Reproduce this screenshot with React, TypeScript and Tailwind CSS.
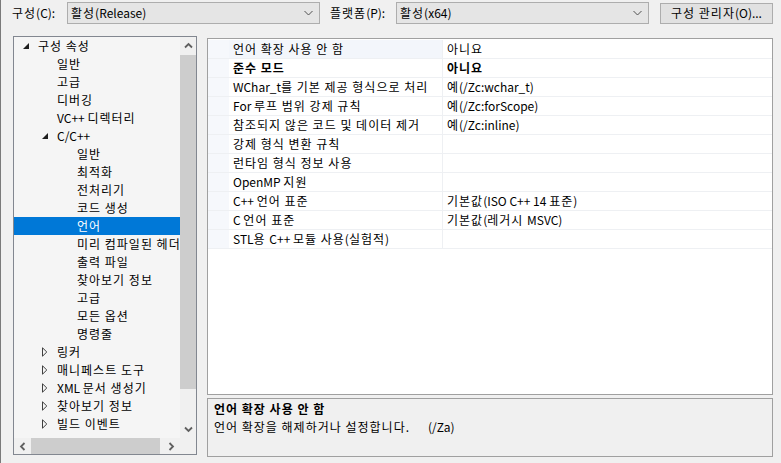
import React from 'react';

type TreeItem = { l: number; t: string; tri?: 'open' | 'closed'; sel?: boolean };

const tree: TreeItem[] = [
  { l: 0, t: '구성 속성', tri: 'open' },
  { l: 1, t: '일반' },
  { l: 1, t: '고급' },
  { l: 1, t: '디버깅' },
  { l: 1, t: 'VC++ 디렉터리' },
  { l: 1, t: 'C/C++', tri: 'open' },
  { l: 2, t: '일반' },
  { l: 2, t: '최적화' },
  { l: 2, t: '전처리기' },
  { l: 2, t: '코드 생성' },
  { l: 2, t: '언어', sel: true },
  { l: 2, t: '미리 컴파일된 헤더' },
  { l: 2, t: '출력 파일' },
  { l: 2, t: '찾아보기 정보' },
  { l: 2, t: '고급' },
  { l: 2, t: '모든 옵션' },
  { l: 2, t: '명령줄' },
  { l: 1, t: '링커', tri: 'closed' },
  { l: 1, t: '매니페스트 도구', tri: 'closed' },
  { l: 1, t: 'XML 문서 생성기', tri: 'closed' },
  { l: 1, t: '찾아보기 정보', tri: 'closed' },
  { l: 1, t: '빌드 이벤트', tri: 'closed' },
];

const props: { n: string; v: string; b?: boolean }[] = [
  { n: '언어 확장 사용 안 함', v: '아니요' },
  { n: '준수 모드', v: '아니요', b: true },
  { n: 'WChar_t를 기본 제공 형식으로 처리', v: '예(/Zc:wchar_t)' },
  { n: 'For 루프 범위 강제 규칙', v: '예(/Zc:forScope)' },
  { n: '참조되지 않은 코드 및 데이터 제거', v: '예(/Zc:inline)' },
  { n: '강제 형식 변환 규칙', v: '' },
  { n: '런타임 형식 정보 사용', v: '' },
  { n: 'OpenMP 지원', v: '' },
  { n: 'C++ 언어 표준', v: '기본값(ISO C++ 14 표준)' },
  { n: 'C 언어 표준', v: '기본값(레거시 MSVC)' },
  { n: 'STL용 C++ 모듈 사용(실험적)', v: '' },
];

const indents = ['w-[0px]', 'w-[19px]', 'w-[39px]'];

// Widen Hangul runs slightly so they match the reference font's metrics.
function K({ s }: { s: string }) {
  const parts = s.split(/([\uAC00-\uD7A3][\uAC00-\uD7A3 ]*)/);
  return (
    <>
      {parts.map((p, i) =>
        /[\uAC00-\uD7A3]/.test(p) ? (
          <span key={i} className="tracking-[1px]">
            {p}
          </span>
        ) : (
          <React.Fragment key={i}>{p}</React.Fragment>
        )
      )}
    </>
  );
}

function Chevron({ dir }: { dir: 'up' | 'down' | 'left' | 'right' }) {
  const d =
    dir === 'up'
      ? 'M1 5.5 L4.5 2 L8 5.5'
      : dir === 'down'
      ? 'M1 1.5 L4.5 5 L8 1.5'
      : dir === 'left'
      ? 'M5.5 1 L2 4.5 L5.5 8'
      : 'M1.5 1 L5 4.5 L1.5 8';
  const w = dir === 'up' || dir === 'down' ? 9 : 7;
  const h = dir === 'up' || dir === 'down' ? 7 : 9;
  return (
    <svg width={w} height={h} viewBox={`0 0 ${w} ${h}`}>
      <path d={d} fill="none" stroke="#606060" strokeWidth="1.8" />
    </svg>
  );
}

function Combo({ text }: { text: string }) {
  return (
    <div className="flex h-[22px] w-[253px] items-center justify-between border border-[#adadad] bg-[#e5e5e5] pl-[3px] pr-[6px]">
      <span>
        <K s={text} />
      </span>
      <svg width="9" height="6" viewBox="0 0 9 6">
        <path d="M0.5 1 L4.5 5 L8.5 1" fill="none" stroke="#505050" strokeWidth="1" />
      </svg>
    </div>
  );
}

export default function App() {
  return (
    <div
      className="relative h-[463px] w-[781px] overflow-hidden bg-[#f0f0f0] text-[12px] text-black shadow-[inset_1px_0_0_#7a7a7a]"
      style={{ fontFamily: '"Noto Sans CJK KR", "Noto Sans", sans-serif' }}
    >
      {/* top bar */}
      <div className="flex h-[26px] items-center pl-[12px]">
        <span className="w-[55px]">
          <K s="구성(C):" />
        </span>
        <Combo text="활성(Release)" />
        <span className="ml-[10px] w-[66px]">
          <K s="플랫폼(P):" />
        </span>
        <Combo text="활성(x64)" />
        <div className="ml-[11px] flex h-[21px] w-[113px] items-center justify-center border border-[#adadad] bg-[#e1e1e1]">
          <K s="구성 관리자(O)..." />
        </div>
      </div>

      <div className="flex items-start">
        {/* tree */}
        <div className="ml-[13px] mt-[10px] flex h-[419px] w-[184px] flex-col border border-[#828790] bg-[#f5f5f5]">
          <div className="flex h-[401px]">
            <div className="w-[166px] overflow-hidden whitespace-nowrap">
              {tree.map((it, i) => (
                <div
                  key={i}
                  className={`flex h-[18px] items-center leading-[18px] ${it.sel ? 'bg-[#0078d7] text-white' : ''}`}
                >
                  <div className={`${indents[it.l]} shrink-0`} />
                  <div className="flex w-[24px] shrink-0 items-center pl-[9px]">
                    {it.tri === 'open' && (
                      <svg width="6" height="6" viewBox="0 0 6 6">
                        <polygon points="6,0 6,6 0,6" fill="#1e1e1e" />
                      </svg>
                    )}
                    {it.tri === 'closed' && (
                      <svg width="6" height="10" viewBox="0 0 6 10">
                        <polygon points="0.5,0.8 4.8,5 0.5,9.2" fill="none" stroke="#404040" strokeWidth="1" />
                      </svg>
                    )}
                  </div>
                  <span>
                    <K s={it.t} />
                  </span>
                </div>
              ))}
            </div>
            {/* vertical scrollbar */}
            <div className="flex w-[16px] flex-col bg-[#f0f0f0]">
              <div className="flex h-[17px] items-center justify-center">
                <Chevron dir="up" />
              </div>
              <div className="mt-[1px] h-[334px] bg-[#cdcdcd]" />
              <div className="flex-1" />
              <div className="flex h-[17px] items-center justify-center">
                <Chevron dir="down" />
              </div>
            </div>
          </div>
          {/* horizontal scrollbar */}
          <div className="flex h-[16px] bg-[#f0f0f0]">
            <div className="flex w-[17px] items-center justify-center">
              <Chevron dir="left" />
            </div>
            <div className="h-full w-[129px] bg-[#cdcdcd]" />
            <div className="flex-1" />
            <div className="flex w-[17px] items-center justify-center">
              <Chevron dir="right" />
            </div>
            <div className="w-[16px] bg-[#f0f0f0]" />
          </div>
        </div>

        {/* right pane */}
        <div className="ml-[10px] mt-[12px] flex w-[566px] flex-col">
          <div className="h-[357px] border border-[#a0a0a0] bg-white pt-[1px]">
            {props.map((p, i) => (
              <div key={i} className="flex h-[19px] border-b border-[#eef0f3] leading-[18px]">
                <div className="w-[21px] shrink-0 bg-[#f6f8fc]" />
                <div
                  className={`w-[214px] shrink-0 overflow-hidden whitespace-nowrap border-r border-[#eef0f3] pl-[4px] ${
                    i === 0 ? 'bg-[#f3f6fb]' : ''
                  } ${p.b ? 'font-bold' : ''}`}
                >
                  <K s={p.n} />
                </div>
                <div className={`flex-1 whitespace-nowrap pl-[4px] ${p.b ? 'font-bold' : ''}`}>
                  <K s={p.v} />
                </div>
              </div>
            ))}
          </div>
          <div className="mt-[3px] h-[59px] border border-[#a0a0a0] bg-[#f0f0f0] pl-[6px] pt-[1px] leading-[18px]">
            <div className="font-bold">
              <K s="언어 확장 사용 안 함" />
            </div>
            <div className="flex whitespace-nowrap">
              <span className="w-[214px] shrink-0">
                <K s="언어 확장을 해제하거나 설정합니다." />
              </span>
              <span>(/Za)</span>
            </div>
          </div>
        </div>
      </div>
    </div>
  );
}
